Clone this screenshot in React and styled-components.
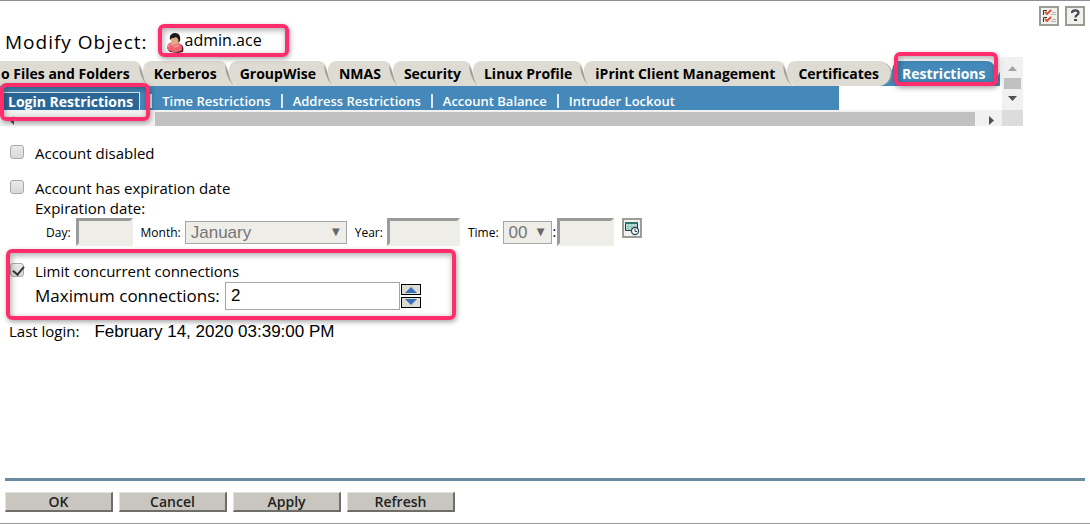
import { Fragment } from "react";
import styled, { createGlobalStyle } from "styled-components";

const GlobalStyle = createGlobalStyle`
  * {
    box-sizing: border-box;
  }
  body {
    margin: 0;
    background: #fff;
    color: #000;
    font-family: "Open Sans", "Noto Sans", sans-serif;
    font-size: 15px;
    line-height: 20px;
  }
`;

const Page = styled.div`
  min-height: 100vh;
  display: flex;
  flex-direction: column;
  border-top: 1px solid #8f8f96;
  border-bottom: 1px solid #9a9a9a;
`;

/* pink marker drawn around the parts that matter */
const Marker = styled.span`
  position: absolute;
  inset: ${(p) => p.$inset};
  z-index: 2;
  border: 4px solid #ff2d6b;
  border-radius: 6px;
  box-shadow: 1px 2px 5px rgba(0, 0, 0, 0.35),
    inset 1px 2px 6px rgba(0, 0, 0, 0.35);
  pointer-events: none;
`;

const Header = styled.header`
  display: flex;
  justify-content: space-between;
  height: 56px;
  padding: 5px 5px 0;
`;

const Heading = styled.div`
  display: flex;
  align-items: center;
  gap: 18px;
  padding-top: 16px;
`;

const Title = styled.h1`
  margin: 0;
  padding-top: 4px;
  font-size: 19px;
  font-weight: 500;
  letter-spacing: 1px;
`;

const ObjectName = styled.div`
  position: relative;
  display: flex;
  align-items: center;
  gap: 1px;
  font-size: 16px;

  & svg {
    margin-top: 6px;
  }
`;

const Tools = styled.div`
  display: flex;
  gap: 6px;
`;

const IconButton = styled.button`
  display: block;
  width: 20px;
  height: 20px;
  padding: 0;
  border: 2px solid #9b9d94;
  background: #f0f0ee;

  & svg {
    display: block;
  }
`;

const DateButton = styled(IconButton)`
  align-self: flex-start;
`;

const Frame = styled.section`
  display: grid;
  grid-template-columns: 1fr 21px;
  height: 69px;
  margin-right: 67px;
`;

const Viewport = styled.div`
  min-width: 0;
  padding-top: 4px;
`;

const Tabs = styled.nav`
  display: flex;
  height: 25px;
`;

const Tab = styled.a`
  position: relative;
  flex: none;
  background: ${(p) => (p.$active ? "#4489b9" : "#dedbd3")};
  color: ${(p) => (p.$active ? "#fff" : "#000")};
  font-size: 14px;
  font-weight: 700;
  line-height: 25px;
  text-decoration: none;
  white-space: nowrap;

  &:first-child {
    padding: 0 1px;
  }
`;

const Edge = styled.svg`
  flex: none;
  display: block;
`;

const SubNav = styled.nav`
  display: flex;
  align-items: flex-end;
  width: 839px;
  max-width: 100%;
  height: 24px;
  background: #4489b9;
`;

const SubItem = styled.a`
  display: flex;
  align-items: center;
  height: 18px;
  padding-right: 10px;
  color: #fff;
  font-size: 13px;
  font-weight: 600;
  line-height: 20px;
  text-decoration: none;
  white-space: nowrap;

  &::before {
    content: "";
    width: 2px;
    height: 14px;
    margin-right: 10px;
    background: #dce9f2;
  }
`;

const SubActive = styled.a`
  position: relative;
  height: 18px;
  margin: 0 10px 0 4px;
  padding: 0 6px 0 4px;
  border: 1px solid #dce9f2;
  border-width: 1px 1px 0 0;
  background: #2b6796;
  color: #fff;
  font-size: 14px;
  font-weight: 700;
  line-height: 18px;
  text-decoration: none;
  white-space: nowrap;
`;

const HBar = styled.div`
  display: grid;
  grid-template-columns: 155px 1fr 27px;
  height: 16px;
  padding-top: 2px;
  background: #f1f1f1;

  & svg {
    display: block;
  }
`;

const Thumb = styled.div`
  background: #c1c1c1;
`;

const VBar = styled.div`
  display: grid;
  grid-template-rows: 21px 11px 1fr;
  height: 53px;
  padding: 0 2px;
  background: #f1f1f1;

  & svg {
    display: block;
  }
`;

const Corner = styled.div`
  background: #dcdcdc;
`;

const Form = styled.form`
  display: flex;
  flex-direction: column;
  flex: 1;
`;

const Settings = styled.div`
  padding: 17px 9px 0;
`;

const CheckRow = styled.div`
  display: flex;
  align-items: flex-start;
  gap: 11px;
  margin-bottom: ${(p) => p.$space || 0}px;
`;

const Check = styled.input`
  appearance: none;
  display: grid;
  width: 14px;
  height: 14px;
  margin: 2px 0 0 1px;
  border: 1px solid #a9a9a9;
  border-radius: 3px;
  background: linear-gradient(#eaeaea, #d8d8d8);

  &:checked::before {
    content: "";
    width: 5px;
    height: 9px;
    margin: 0 0 0 4px;
    border: solid #333;
    border-width: 0 2px 2px 0;
    transform: rotate(40deg);
  }
`;

const Indented = styled.div`
  padding-left: 26px;
`;

const Fields = styled.div`
  display: flex;
  align-items: center;
  height: 28px;
  padding-left: 37px;
`;

const Field = styled.div`
  display: flex;
  align-items: center;
  gap: ${(p) => p.$gap || 4}px;
  margin-right: 8px;
  font-size: 12px;

  & > label {
    padding-top: 2px;
  }
`;

const SmallInput = styled.input`
  width: ${(p) => (p.$wide ? 73 : 57)}px;
  height: 28px;
  padding: 0 4px;
  border: 3px solid;
  border-color: #9b9b9b #eeede8 #eeede8 #9b9b9b;
  background: #eeede8;
`;

const SelectBox = styled.span`
  position: relative;

  &::after {
    content: "▼";
    position: absolute;
    right: 7px;
    top: 0;
    color: #666;
    font: 10px/22px "DejaVu Sans", sans-serif;
    pointer-events: none;
  }
`;

const Select = styled.select`
  appearance: none;
  display: block;
  width: ${(p) => (p.$wide ? 162 : 49)}px;
  height: 23px;
  padding: 0 5px;
  border: 1px solid #a6a6a6;
  border-radius: 0;
  background: #eeede8;
  color: #757575;
  opacity: 1;
  font: 17px "Liberation Sans", Arial, sans-serif;
`;

const Colon = styled.span`
  margin: 0 -3px;
  font-size: 14px;
`;

const LimitGroup = styled.div`
  position: relative;
  width: 444px;
  margin-top: 15px;
`;

const Maximum = styled.div`
  display: flex;
  align-items: center;
  height: 30px;
  padding-left: 26px;

  & label {
    width: 190px;
    font-size: 17px;
    font-weight: 500;
  }
`;

const MaxInput = styled.input`
  width: 175px;
  height: 28px;
  padding: 0 5px;
  border: 1px solid #a6a6a6;
  font: 17px "Liberation Sans", Arial, sans-serif;
`;

const Spinner = styled.div`
  display: grid;
  gap: 2px;
  margin-left: 1px;
`;

const SpinButton = styled.button`
  width: 20px;
  height: 11px;
  padding: 0;
  border: 1px solid #000;
  background: #dedbd3;

  & svg {
    display: block;
  }
`;

const LastLogin = styled.div`
  display: flex;
  gap: 15px;
  margin-top: 10px;

  & time {
    font: 17px/22px "Liberation Sans", Arial, sans-serif;
  }
`;

const Footer = styled.footer`
  display: flex;
  gap: 6px;
  margin: auto 5px 0;
  padding: 11px 0;
  border-top: 3px solid #6a8ba0;
`;

const Button = styled.button`
  width: 108px;
  height: 20px;
  padding: 0;
  border: 1px solid;
  border-color: #e4e2dc #6f6d68 #6f6d68 #e4e2dc;
  border-width: 1px 2px 2px 1px;
  background: #c9c6bf;
  color: #222;
  font: 600 14px/16px "Open Sans", "Noto Sans", sans-serif;
`;

const tabs = [
  "o Files and Folders",
  "Kerberos",
  "GroupWise",
  "NMAS",
  "Security",
  "Linux Profile",
  "iPrint Client Management",
  "Certificates",
];

const subItems = [
  "Time Restrictions",
  "Address Restrictions",
  "Account Balance",
  "Intruder Lockout",
];

const TabEdge = () => (
  <Edge width="23" height="25" viewBox="0 0 23 25" aria-hidden="true">
    <path d="M0 0h1c6 0 8 2 10 8l4 13 3 4H0z" fill="#dedbd3" />
    <path d="M23 0h-2c-6 0-9 4-9 9 0 8 3 13 7 16h4z" fill="#dedbd3" />
    <path d="M8 4c2 3 3 6 4 10 1 5 3 9 7 11-5-2-8-7-10-14z" fill="#a09f99" />
  </Edge>
);

const ActiveEdge = () => (
  <Edge width="23" height="25" viewBox="0 0 23 25" aria-hidden="true">
    <path d="M23 0h-3c-4 0-6 4-7 9L5 25h18z" fill="#4489b9" />
    <path d="M0 25h23v-4H8z" fill="#4489b9" />
    <path d="M0 0c8 0 12 6 12 12S7 25 0 25z" fill="#dedbd3" />
    <path d="M6 2c4 2 7 6 7 10 0 5-2 9-6 12 3-4 5-8 5-12 0-4-2-7-6-10z" fill="#8f9a9f" />
  </Edge>
);

const EndEdge = () => (
  <Edge width="14" height="25" viewBox="0 0 14 25" aria-hidden="true">
    <path d="M0 0c6 0 8 3 9 8l3 13 2 4H0z" fill="#4489b9" />
    <path d="M14 11c-3 3-3 10 0 14z" fill="#4489b9" />
    <path d="M7 3c3 6 3 16 7 22-3-4-5-7-6-12z" fill="#6d7e88" />
  </Edge>
);

const UserIcon = () => (
  <svg width="18" height="20" viewBox="0 0 18 20" aria-hidden="true">
    <path d="M2 17c0-5 2-7 5-7l7 1c3 1 4 4 3 8l-5 1-8-1z" fill="#4b2025" />
    <path d="M1 16c0-4 1-6 5-7l3 3 4-2c3 1 3 4 3 7-4 3-10 3-15-1z" fill="#ef6670" />
    <path d="M2 14c1-2 2-3 4-3l3 3 4-2" fill="none" stroke="#ffb3b5" />
    <ellipse cx="9" cy="7" rx="4" ry="5" fill="#e5aa80" />
    <path d="M4 7c-1-5 2-7 5-7 4 0 6 3 5 8l-2 2c1-3 0-5-2-6-2 1-3 1-4 1z" fill="#1b1b1e" />
  </svg>
);

const ChecklistIcon = () => (
  <svg width="16" height="16" viewBox="0 0 16 16" aria-hidden="true">
    <path d="M6 2.500H2.500V7M6 9.500H2.500V14" fill="none" stroke="#333" />
    <path d="M4 4l2 2 4-4M4 11l2 2 4-4" fill="none" stroke="#e04a2c" strokeWidth="1.8" />
    <path d="M11 4.500h4M10 6.500h5M11 11.500h4M10 13.500h5" stroke="#b5b5b5" />
  </svg>
);

const HelpIcon = () => (
  <svg width="16" height="16" viewBox="0 0 16 16" aria-hidden="true">
    <path d="M5 5c0-3.500 6.500-3.500 6.500 0 0 2-3 2-3 4.500" fill="none" stroke="#444b50" strokeWidth="2.200" />
    <path d="M7 11h3v2H7z" fill="#444b50" />
  </svg>
);

const CalendarIcon = () => (
  <svg width="16" height="16" viewBox="0 0 16 16" aria-hidden="true">
    <path d="M1.500 2.500h12v8h-12z" fill="#b9dcd6" stroke="#163f3a" />
    <path d="M1 2h13v2H1z" fill="#2f7565" />
    <path d="M2 6.500h11M2 8.500h11M4.500 4v6M7.500 4v6M10.500 4v6" stroke="#8fc0b8" strokeWidth="0.700" />
    <circle cx="11" cy="11" r="3.500" fill="#fff" stroke="#334b55" strokeWidth="1.300" />
    <path d="M11 9v2.500h2" fill="none" stroke="#334b55" />
  </svg>
);

const App = () => {
  return (
    <>
      <GlobalStyle />
      <Page>
        <Header>
          <Heading>
            <Title>Modify Object:</Title>
            <ObjectName>
              <UserIcon />
              admin.ace
              <Marker $inset="-3px -27px -4px -8px" />
            </ObjectName>
          </Heading>
          <Tools>
            <IconButton type="button" aria-label="Object list">
              <ChecklistIcon />
            </IconButton>
            <IconButton type="button" aria-label="Help">
              <HelpIcon />
            </IconButton>
          </Tools>
        </Header>

        <Frame>
          <Viewport>
            <Tabs>
              {tabs.map((tab, i) => (
                <Fragment key={tab}>
                  <Tab href="#">{tab}</Tab>
                  {i < tabs.length - 1 ? <TabEdge /> : <ActiveEdge />}
                </Fragment>
              ))}
              <Tab href="#" $active>
                Restrictions
                <Marker $inset="-9px -12px 0 -8px" />
              </Tab>
              <EndEdge />
            </Tabs>
            <SubNav>
              <SubActive href="#">
                Login Restrictions
                <Marker $inset="-10px -11px -11px -4px" />
              </SubActive>
              {subItems.map((item) => (
                <SubItem href="#" key={item}>
                  {item}
                </SubItem>
              ))}
            </SubNav>
          </Viewport>
          <VBar>
            <svg width="17" height="21" aria-hidden="true">
              <path d="M4 14h9L8.500 9z" fill="#a3a3a3" />
            </svg>
            <Thumb />
            <svg width="17" height="21" aria-hidden="true">
              <path d="M4 7h9l-4.500 5z" fill="#505050" />
            </svg>
          </VBar>
          <HBar>
            <svg width="20" height="14" aria-hidden="true">
              <path d="M14 4v9L9.500 8.500z" fill="#505050" />
            </svg>
            <Thumb />
            <svg width="27" height="14" aria-hidden="true">
              <path d="M14 4v9l5-4.500z" fill="#505050" />
            </svg>
          </HBar>
          <Corner />
        </Frame>

        <Form onSubmit={(e) => e.preventDefault()}>
          <Settings>
            <CheckRow $space={15}>
              <Check type="checkbox" id="disabled" />
              <label htmlFor="disabled">Account disabled</label>
            </CheckRow>
            <CheckRow>
              <Check type="checkbox" id="expires" />
              <label htmlFor="expires">Account has expiration date</label>
            </CheckRow>
            <Indented>Expiration date:</Indented>
            <Fields>
              <Field $gap={5}>
                <label htmlFor="day">Day:</label>
                <SmallInput id="day" disabled />
              </Field>
              <Field>
                <label htmlFor="month">Month:</label>
                <SelectBox>
                  <Select id="month" $wide disabled>
                    <option>January</option>
                  </Select>
                </SelectBox>
              </Field>
              <Field>
                <label htmlFor="year">Year:</label>
                <SmallInput id="year" $wide disabled />
              </Field>
              <Field>
                <label htmlFor="hour">Time:</label>
                <SelectBox>
                  <Select id="hour" disabled>
                    <option>00</option>
                  </Select>
                </SelectBox>
                <Colon>:</Colon>
                <SmallInput aria-label="Minutes" disabled />
              </Field>
              <DateButton type="button" aria-label="Pick date and time">
                <CalendarIcon />
              </DateButton>
            </Fields>
            <LimitGroup>
              <CheckRow>
                <Check type="checkbox" id="limit" defaultChecked />
                <label htmlFor="limit">Limit concurrent connections</label>
              </CheckRow>
              <Maximum>
                <label htmlFor="maximum">Maximum connections:</label>
                <MaxInput id="maximum" defaultValue="2" />
                <Spinner>
                  <SpinButton type="button" aria-label="Increase">
                    <svg width="18" height="9" aria-hidden="true">
                      <path d="M3 8h12L9 2z" fill="#3673b5" />
                    </svg>
                  </SpinButton>
                  <SpinButton type="button" aria-label="Decrease">
                    <svg width="18" height="9" aria-hidden="true">
                      <path d="M3 1h12L9 7z" fill="#3673b5" />
                    </svg>
                  </SpinButton>
                </Spinner>
              </Maximum>
              <Marker $inset="-12px -3px -9px -3px" />
            </LimitGroup>
            <LastLogin>
              <span>Last login:</span>
              <time dateTime="2020-02-14T15:39:00">February 14, 2020 03:39:00 PM</time>
            </LastLogin>
          </Settings>
          <Footer>
            <Button type="submit">OK</Button>
            <Button type="button">Cancel</Button>
            <Button type="button">Apply</Button>
            <Button type="button">Refresh</Button>
          </Footer>
        </Form>
      </Page>
    </>
  );
};

export default App;
